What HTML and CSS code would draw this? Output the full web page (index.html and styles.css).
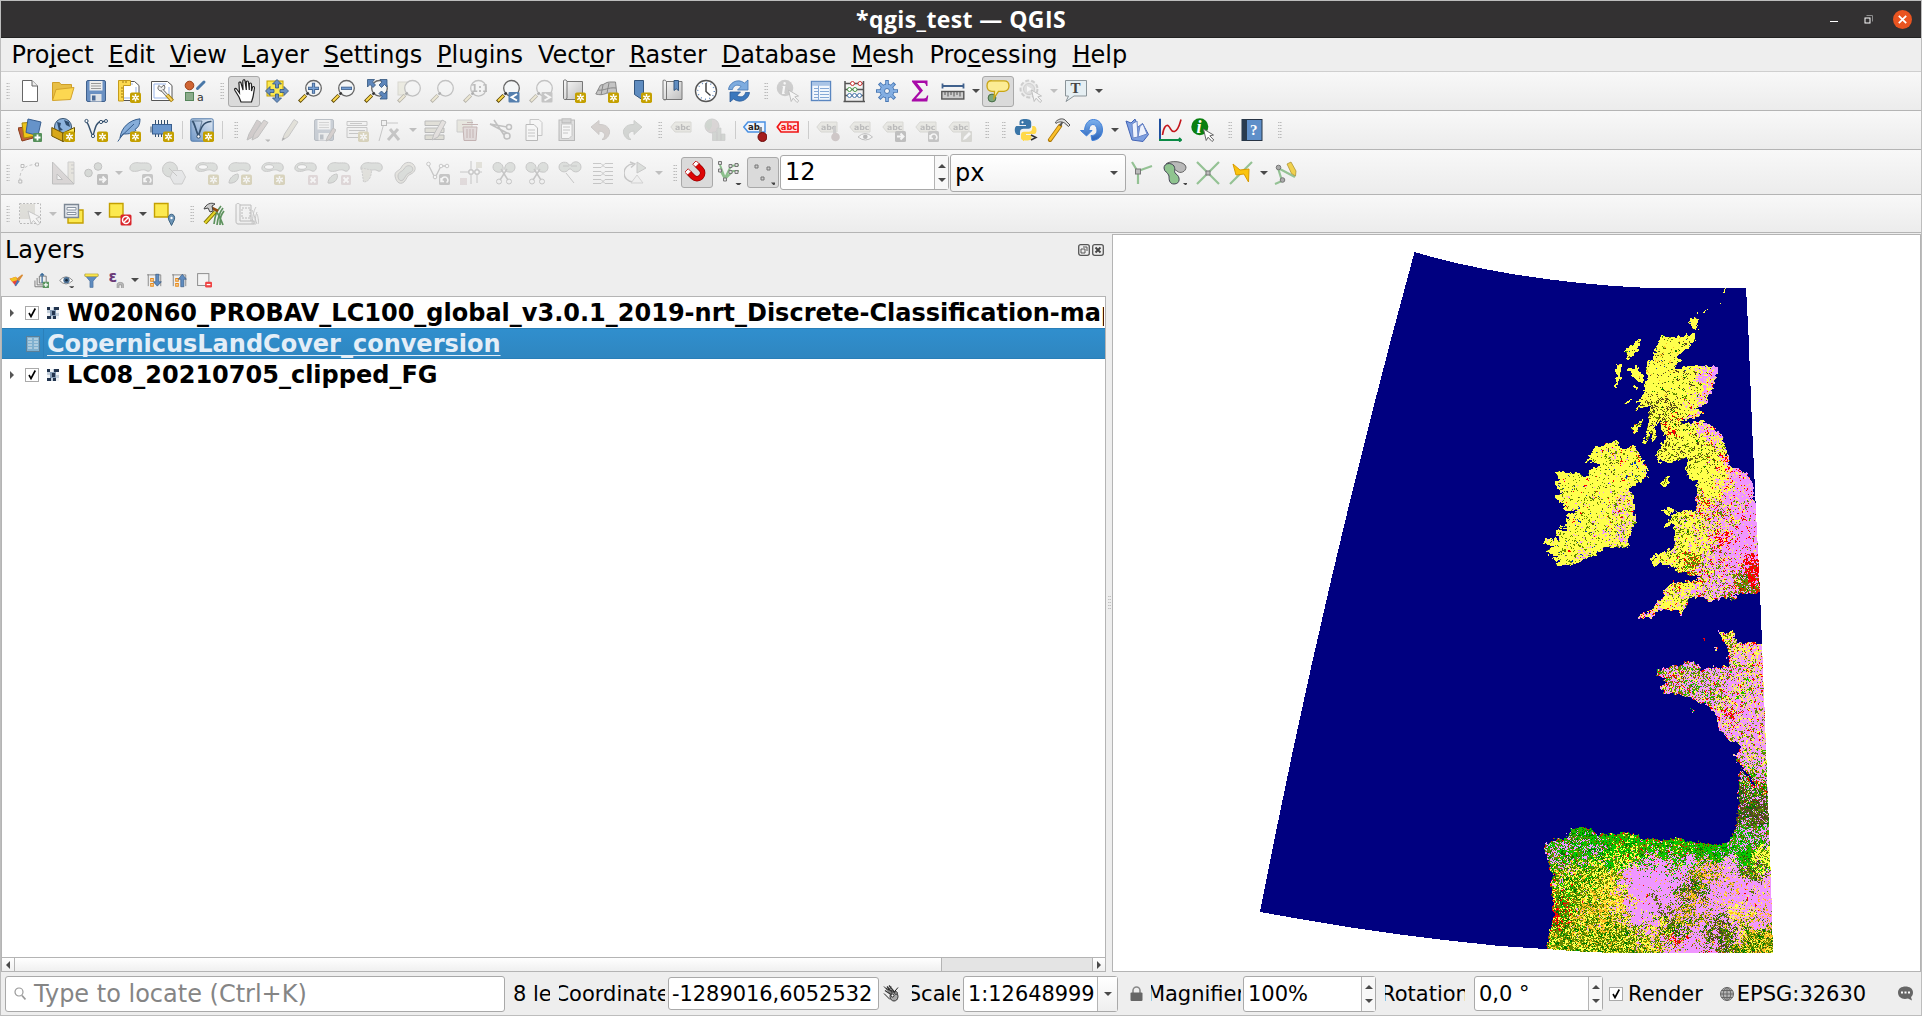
FILE: index.html
```html
<!DOCTYPE html>
<html lang="en">
<head>
<meta charset="utf-8">
<title>*qgis_test — QGIS</title>
<link rel="stylesheet" href="styles.css">
</head>
<body>
<svg class="sprite" width="0" height="0" aria-hidden="true">
  <defs>
    <linearGradient id="steel" x1="0" y1="0" x2="1" y2="1"><stop offset="0" stop-color="#fafafa"/><stop offset="1" stop-color="#bdbdbd"/></linearGradient>
    <linearGradient id="sky" x1="0" y1="0" x2="0" y2="1"><stop offset="0" stop-color="#7db2ee"/><stop offset="1" stop-color="#2a62b8"/></linearGradient>
    <linearGradient id="pale" x1="0" y1="1" x2="1" y2="0"><stop offset="0" stop-color="#6f96c6"/><stop offset="1" stop-color="#e2ebf5"/></linearGradient>
  </defs>
  <!-- corner badges -->
  <symbol id="b-new" viewBox="0 0 24 24"><rect x="13" y="13.5" width="11" height="10.5" rx="1.8" fill="#c4a000"/><path d="M18.5 15v7.600M15.200 16.900l6.600 3.800M21.800 16.900l-6.600 3.800" stroke="#fff" stroke-width="1.500"/><circle cx="18.500" cy="18.800" r="1.500" fill="#fff"/><circle cx="18.500" cy="18.800" r=".7" fill="#c4a000"/></symbol>
  <symbol id="b-del" viewBox="0 0 24 24"><rect x="14" y="14" width="10" height="10" rx="1.500" fill="#d9a0a8"/><path d="M16.500 16.500l5 5M21.500 16.500l-5 5" stroke="#fff" stroke-width="1.800"/></symbol>
  <symbol id="b-go" viewBox="0 0 24 24"><rect x="13" y="13" width="11" height="11" rx="1.500" fill="#666"/><path d="M15 18.500h6M18.500 15.500l3 3-3 3" stroke="#fff" stroke-width="2" fill="none"/></symbol>
  <symbol id="b-rot" viewBox="0 0 24 24"><rect x="13" y="13" width="11" height="11" rx="1.500" fill="#777"/><path d="M16 20a3 3 0 1 1 4.500 1.500M15 17v3.500h3" stroke="#fff" stroke-width="1.500" fill="none"/></symbol>
  <symbol id="loupe" viewBox="0 0 24 24"><circle cx="15.500" cy="9.300" r="7.800" fill="#f4f6f7" stroke="#666" stroke-width="1.300"/><path d="M8.500 15.500l2.200-2" stroke="#333" stroke-width="2.200"/><path d="M1.300 22.700l6.500-6.500" stroke="#5a4500" stroke-width="3.600"/><path d="M2 22l5.500-5.500" stroke="#fcd94f" stroke-width="2"/></symbol>
  <symbol id="pointer" viewBox="0 0 24 24"><path d="M12.500 11l10 6-3.700.8 4 4.200-1.800 1.500-3.900-4.300-1.900 3.300z" fill="#fff" stroke="#666" stroke-width="1"/></symbol>
  <symbol id="tag" viewBox="0 0 24 24"><path d="M.8 9L5 4h16v10H5z" fill="#d5d3b4" stroke="#a8a68c"/><text x="5" y="12" font-size="7.800" font-weight="bold" fill="#555">abc</text></symbol>
  <symbol id="blob" viewBox="0 0 24 24"><path d="M1 6c1-4 6-5 10-4 5 0 10-1 11 3 1 3-1 6-4 5-3-2-6-1-9 0-5 1-9 0-8-4z" fill="#a8bba8" stroke="#777"/></symbol>
  <symbol id="sheet" viewBox="0 0 24 24"><path d="M1.500 2.500h16l4.500 4v15h-20.500z" fill="#fff" stroke="#555"/><path d="M4 5h12M4 5v14h15V8" fill="none" stroke="#9ab5ea"/></symbol>
  <!-- project -->
  <symbol id="new" viewBox="0 0 24 24"><path d="M4.500 1.500h9.500l5.500 5.500v15.500h-15z" fill="#fff" stroke="#666"/><path d="M14 1.500v5.500h5.500" fill="#eee" stroke="#666"/></symbol>
  <symbol id="open" viewBox="0 0 24 24"><path d="M1.500 21V3.500h7l1.500 2h10.500V10" fill="#e8bf46" stroke="#cf9f28"/><path d="M1.500 21.500L5 10.500l18-2-3.500 12z" fill="#fcd751" stroke="#d3a32a"/></symbol>
  <symbol id="save" viewBox="0 0 24 24"><rect x="2.500" y="1.500" width="19" height="21" rx="1.500" fill="#6a90c2" stroke="#40618d"/><rect x="5.500" y="2" width="13" height="9.500" fill="#eee"/><path d="M7 4.500h10M7 7h10M7 9.500h10" stroke="#999"/><rect x="6.500" y="15" width="11" height="7.500" fill="#dfe3e8"/><rect x="8" y="16.500" width="3.500" height="5" fill="#4a6a97"/></symbol>
  <symbol id="layout" viewBox="0 0 24 24"><use href="#sheet"/><path d="M1.500 1.500h12v5h-7v15.500h-5z" fill="#fcd94f" stroke="#c49b1c"/><path d="M4 9h2M4 12h2M4 15h2M4 18h2M9 2v2M6 2v2" stroke="#a07a10"/><use href="#b-new"/></symbol>
  <symbol id="manager" viewBox="0 0 24 24"><use href="#sheet"/><path d="M9 6.500l2 2 3-2.500c2 3 0 6-3 6-3-.5-4-3-2-5.500z" fill="#eee" stroke="#666"/><path d="M12 11l5.500 6" stroke="#666" stroke-width="3"/><path d="M12 11l5.500 6" stroke="#eee" stroke-width="1.500"/><path d="M17 16l5.500 6" stroke="#a57c00" stroke-width="4"/><path d="M17 16l5 5.500" stroke="#f5d060" stroke-width="2"/></symbol>
  <symbol id="style" viewBox="0 0 24 24"><circle cx="6.500" cy="6.500" r="4.300" fill="#cf6534" stroke="#9b3e14"/><path d="M14.500 9.500l6.500-6.500" stroke="#4a78a8" stroke-width="3" stroke-linecap="round"/><rect x="2.500" y="13.500" width="8" height="8" fill="#8bab8b" stroke="#55855a"/><text x="14" y="22" font-size="11" font-style="normal" font-weight="normal" fill="#333">a</text></symbol>
  <!-- navigation -->
  <symbol id="hand" viewBox="0 0 24 24"><path d="M7 14L4.500 10.500C3 8.500 1.500 9.500 2.500 11.500L6.500 18l2 5h10.500l1.500-5 1.500-9c0-2-2-2-2.200 0L19 12V5.500c0-2-2.200-2-2.200 0V11l-.8-7.500c0-2-2.300-2-2.200 0V11L12.500 2c-.2-2-2.300-1.500-2.200.5L10.500 11 8.500 4c-.5-1.800-2.500-1-2 .8z" fill="#fff" stroke="#222" stroke-width="1.200" transform="translate(.5)"/></symbol>
  <symbol id="panto" viewBox="0 0 24 24"><rect x="2" y="2" width="16" height="15" fill="#fce94f" stroke="#c4a000"/><path d="M12 .5l4.500 4.500h-3v4h-3V5h-3zM12 23.500l4.500-4.500h-3v-4h-3v4h-3zM.5 12L5 7.500v3h4v3H5v3zM23.500 12L19 7.500v3h-4v3h4v3z" fill="#6a90c2" stroke="#33557d" stroke-width=".8"/></symbol>
  <symbol id="zin" viewBox="0 0 24 24"><use href="#loupe"/><path d="M15.500 3.800v11M10 9.300h11" stroke="#40618d" stroke-width="3.200"/><path d="M15.500 4.500v9.600M10.700 9.300h9.600" stroke="#76a0d4" stroke-width="1.500"/></symbol>
  <symbol id="zout" viewBox="0 0 24 24"><use href="#loupe"/><path d="M10 9.300h11" stroke="#40618d" stroke-width="3.200"/><path d="M10.700 9.300h9.600" stroke="#76a0d4" stroke-width="1.500"/></symbol>
  <symbol id="zfull" viewBox="0 0 24 24"><use href="#loupe"/><path d="M3.500.5h7L8.500 3l3 3L9 8.500l-3-3-2.500 2.500zM23 .5h-7l2 2.500-3 3L17.500 8.500l3-3L23 8zM23 20h-7l2-2.500-3-3 2.500-2.500 3 3L23 12z" fill="#5d86bb" stroke="#33557d" stroke-width=".8"/></symbol>
  <symbol id="zsel" viewBox="0 0 24 24"><rect x="1" y="3" width="13" height="13" fill="#e0dc9a" stroke="#aaa578"/><use href="#loupe"/></symbol>
  <symbol id="z11" viewBox="0 0 24 24"><use href="#loupe"/><text x="8" y="13" font-size="10" font-weight="bold" fill="#555">1:1</text></symbol>
  <symbol id="zprev" viewBox="0 0 24 24"><use href="#loupe"/><rect x="12.500" y="13" width="11" height="10.500" rx="1" fill="#557fae"/><path d="M21 15l-5.500 3.300L21 21.500" stroke="#fff" stroke-width="2" fill="none"/></symbol>
  <symbol id="znext" viewBox="0 0 24 24"><use href="#loupe"/><rect x="12.500" y="13" width="11" height="10.500" rx="1" fill="#777"/><path d="M15.500 15l5.500 3.300-5.500 3.200" stroke="#fff" stroke-width="2" fill="none"/></symbol>
  <symbol id="mapnew" viewBox="0 0 24 24"><path d="M1.500 1.500c2-1.500 3.500 0 3.500 1V19c-.5 2-3 2-3.500.5zM5 2.500h15.500v18H3" fill="url(#steel)" stroke="#777"/><use href="#b-new"/></symbol>
  <symbol id="map3d" viewBox="0 0 24 24"><path d="M.8 15L5.500 6c4 0 5-3 9-3h6l1.500 13-8-2c-4 0-6 3-13.200 1z" fill="#c4c4c4" stroke="#888"/><path d="M3 11c6 1 10-3 18-2M8 6L6 16M14 4l-2 10" stroke="#888" fill="none"/><use href="#b-new"/></symbol>
  <symbol id="bmnew" viewBox="0 0 24 24"><path d="M6.500 1.500h9v20l-4.500-3-4.500-3z" fill="#5f8cc0" stroke="#33557d"/><use href="#b-new"/></symbol>
  <symbol id="bms" viewBox="0 0 24 24"><path d="M2 1.500c1.500-1 3.500 0 3.500 1.500v17c0 1-3 1.500-3.500 0zM5.500 2.500h15.500v18H3" fill="url(#steel)" stroke="#777"/><path d="M13 1.500h4.500v10L15.200 9.800 13 11.500z" fill="#5f8cc0" stroke="#33557d"/></symbol>
  <symbol id="clock" viewBox="0 0 24 24"><circle cx="12" cy="12" r="10.500" fill="#fff" stroke="#555" stroke-width="1.400"/><circle cx="12" cy="12" r="8.300" fill="none" stroke="#6a90c2" stroke-width="1.500" stroke-dasharray="1 3.345"/><path d="M12 4v8.500l4.500 4" stroke="#444" stroke-width="1.500" fill="none"/></symbol>
  <symbol id="refresh" viewBox="0 0 24 24"><path d="M1.500 10.500C2 4.500 10-1.500 17.500 4L21 1v10H10.500l3.500-3.500C10 4.500 6 7 5.500 10.500z" fill="#7eacdf" stroke="#4476b4" stroke-width=".8"/><path d="M22.500 13.500C22 19.500 14 25.500 6.500 20L3 23V13h10.500L10 16.500c4 3 8 .5 8.500-3z" fill="#3b78bd" stroke="#2b5c99" stroke-width=".8"/></symbol>
  <!-- attributes -->
  <symbol id="ident" viewBox="0 0 24 24"><circle cx="9" cy="9" r="8.300" fill="#888"/><text x="5.500" y="14.500" font-family="Liberation Serif" font-size="16" font-weight="bold" font-style="italic" fill="#fff">i</text><use href="#pointer"/></symbol>
  <symbol id="table" viewBox="0 0 24 24"><rect x="2.500" y="2.500" width="19" height="19" fill="#f2f7fd" stroke="#5a86c0" stroke-width="1.400"/><path d="M3 4.800h18" stroke="#a9c4e6" stroke-width="4"/><path d="M5 9.500h4M11 9.500h9M5 12.500h4M11 12.500h9M5 15.500h4M11 15.500h9M5 18.500h4M11 18.500h9M9.500 6.500v15" stroke="#86a9d6"/></symbol>
  <symbol id="abacus" viewBox="0 0 24 24"><path d="M3 2v20M21.500 2v20M1.500 22.500h21.500M3 4.500h18.500M3 10.500h18.500M3 16.500h18.500" stroke="#555" stroke-width="1.500"/><g stroke-width="1" fill="#fff"><g stroke="#c33"><circle cx="10.500" cy="4.500" r="2"/><circle cx="18" cy="4.500" r="2"/></g><g stroke="#4a9a4a"><circle cx="7.500" cy="10.500" r="2"/><circle cx="13" cy="10.500" r="2"/></g><g stroke="#4a7ab0"><circle cx="7.500" cy="16.500" r="2"/><circle cx="12.500" cy="16.500" r="2"/><circle cx="17.500" cy="16.500" r="2"/></g></g></symbol>
  <symbol id="gear" viewBox="0 0 24 24"><g stroke="#4a79b5" stroke-width="3.600"><path d="M12 1v22M1 12h22M4.200 4.200l15.600 15.600M19.800 4.200L4.200 19.800"/></g><circle cx="12" cy="12" r="7" fill="#83aee2" stroke="#4a79b5"/><g stroke="#83aee2" stroke-width="2"><path d="M12 2v20M2 12h20M5 5l14 14M19 5L5 19"/></g><circle cx="12" cy="12" r="2.500" fill="#f5f5f5" stroke="#4a79b5"/></symbol>
  <symbol id="sigma" viewBox="0 0 24 24"><path d="M4 1.500h15.500v5.500h-1.300c-.5-2.500-1-3-3.700-3H9l6 7.500-7 8h7.500c2.500 0 3-1 3.500-3h1.300L19.300 22.500H3.800v-1.500l7.700-8.800L4 2.800z" fill="#a80aa8"/></symbol>
  <symbol id="ruler" viewBox="0 0 24 24"><path d="M1 7h22M1.500 4.500v5M22.500 4.500v5" stroke="#40618d" stroke-width="1.800"/><rect x=".8" y="12.500" width="22" height="7.500" fill="#ccc" stroke="#555" stroke-width="1.400"/><path d="M4 13v3M7 13v4.500M10 13v3M13 13v4.500M16 13v3M19 13v4.500" stroke="#555"/></symbol>
  <symbol id="tip" viewBox="0 0 24 24"><circle cx="6" cy="19" r="3.900" fill="#7fa87f" stroke="#456b45"/><path d="M6 1.800h12q5 0 5 5t-5 5.500h-5.500L8 19l.5-6.700H6q-5 0-5-5.500t5-5z" fill="#fcec94" stroke="#c9a515" stroke-width="1.300"/></symbol>
  <symbol id="action" viewBox="0 0 24 24"><circle cx="10" cy="10" r="8.500" fill="#e0e0e0" stroke="#888" stroke-width="2" stroke-dasharray="4 2"/><circle cx="10" cy="10" r="5.500" fill="#bbb" stroke="#888"/><path d="M8 7l5 3-5 3z" fill="#fff"/><use href="#pointer"/></symbol>
  <symbol id="note" viewBox="0 0 24 24"><path d="M1.500 1.500h21v15.500H10L2 22.500 4.500 17h-3z" fill="#e6eff3" stroke="#8b9499"/><text x="6.500" y="13.500" font-family="Liberation Serif" font-size="15" font-weight="bold" fill="#444">T</text></symbol>
  <!-- data sources -->
  <symbol id="source" viewBox="0 0 24 24"><path d="M0 10l12-2 3 12-11 3z" fill="#c0603a" stroke="#8a3c1c"/><path d="M4 5l12-1 1 14-11 2z" fill="#efc419" stroke="#a8860a"/><path d="M10 1l13 3-3 13.500-12-3z" fill="#6693c9" stroke="#395f8f"/><rect x="15" y="15" width="9" height="9" rx="1" fill="#55905a"/><path d="M19.500 16.500v6M16.500 19.500h6" stroke="#fff" stroke-width="1.800"/></symbol>
  <symbol id="geopkg" viewBox="0 0 24 24"><circle cx="12" cy="9" r="8.500" fill="#8eb4dd" stroke="#34516f"/><path d="M6 4l4 1-1 4 3 3-4 1zM13 2l5 2 1 5-4-2z" fill="#2f4d6d"/><path d="M.8 9.500L12 15v8.500L.8 18z" fill="#d8a81a" stroke="#6d5300"/><path d="M23.500 9.500L12 15v8.500l11.500-5z" fill="#fbe95d" stroke="#6d5300"/><use href="#b-new"/></symbol>
  <symbol id="vnew" viewBox="0 0 24 24"><path d="M2 3.500C5 5 6 14 9 18c2-7 3-14 8-14.500h5" stroke="#34506e" fill="none" stroke-width="1.400"/><g fill="#fff" stroke="#34506e"><circle cx="2.500" cy="3" r="1.600"/><circle cx="9" cy="18" r="1.600"/><circle cx="17" cy="4" r="1.600"/><circle cx="22" cy="3" r="1.500"/></g><use href="#b-new"/></symbol>
  <symbol id="feather" viewBox="0 0 24 24"><path d="M3 20C4 10 12 2 23 .8c0 6-2 9-5 10.500l1 1C15 16 10 16 6 16z" fill="#86add9" stroke="#365e8e"/><path d="M.8 23.500L5 17.500 17 6" stroke="#365e8e" fill="none"/><use href="#b-new"/></symbol>
  <symbol id="chip" viewBox="0 0 24 24"><path d="M5.500 2v4M8.500 2v4M11.500 2v4M14.500 2v4M17.500 2v4M5.500 15v4M8.500 15v4M11.500 15v4M14.500 15v4" stroke="#34506e"/><rect x="2.500" y="6.500" width="19" height="9.500" fill="#6a96cc" stroke="#395f8f"/><path d="M1 8.500v6" stroke="#34506e"/><use href="#b-new"/></symbol>
  <symbol id="virt" viewBox="0 0 24 24"><rect x=".8" y=".8" width="22.400" height="22.400" rx="1.500" fill="url(#pale)" stroke="#4f78a8"/><path d="M2.500 3C5 5 6 14 8.500 18c2-7 4-14 12-14.500h1" stroke="#34506e" fill="none" stroke-width="1.600"/><path d="M2 3h10l-3.500 14z" fill="none" stroke="#34506e" stroke-width=".6"/><circle cx="8.500" cy="18.500" r="1.700" fill="#fff" stroke="#34506e"/><use href="#b-new"/></symbol>
  <!-- digitizing -->
  <symbol id="pencil" viewBox="0 0 24 24"><path d="M3 22.500L5.500 16 15 1.500l4 2.500-9.500 14.500z" fill="#cbbf8d" stroke="#777"/><path d="M3 22.500l1-3 2 1.200z" fill="#333"/></symbol>
  <symbol id="pencils" viewBox="0 0 24 24"><path d="M1 22L3 16 11 2l4 2.500L7 19z" fill="#a88080" stroke="#666"/><path d="M6 22L8 16 18 2l4 2.500L12 19z" fill="#b9958c" stroke="#666"/><path d="M19 21.500h6l-3 2.500z" fill="#555"/></symbol>
  <symbol id="savee" viewBox="0 0 24 24"><use href="#save"/><path d="M14 23l1.500-4L21 10l3 2-5.500 9z" fill="#b98f88" stroke="#666"/></symbol>
  <symbol id="addrec" viewBox="0 0 24 24"><path d="M2 3.500h20v4H2zM2 9.500h20v10H2zM4 12.500h16M4 15.500h16M5 5.500h12" fill="#eee" stroke="#777"/><use href="#b-new"/></symbol>
  <symbol id="vertex" viewBox="0 0 24 24"><path d="M1 23L6 5h14" stroke="#777" fill="none"/><rect x="3.500" y="2.500" width="5" height="5" fill="#eee" stroke="#555"/><path d="M10 22L20 11M12 11l9 11" stroke="#777" stroke-width="3"/></symbol>
  <symbol id="multi" viewBox="0 0 24 24"><path d="M2 3h19v4.500H2zM2 10h19v4.500H2zM2 17h19v4.500H2z" fill="#c4bc88" stroke="#555"/><path d="M9 22l2-6L19 2l4 2-8 15z" fill="#d5bcb0" stroke="#666"/></symbol>
  <symbol id="trash" viewBox="0 0 24 24"><path d="M1 2h15v12H1z" fill="#d5d09a" stroke="#888"/><path d="M7 9h14l-1 13.500H8zM6 6.500h16M11 4.500h6" fill="#dba9a9" stroke="#a33"/><path d="M11 11v9M14 11v9M17 11v9" stroke="#a33"/></symbol>
  <symbol id="cut" viewBox="0 0 24 24"><path d="M1 6l17 9M5 2l10 15M1 6l17 3" stroke="#666" stroke-width="1.600" fill="none"/><circle cx="20" cy="9" r="2.500" fill="none" stroke="#666" stroke-width="1.500"/><circle cx="18" cy="18" r="3" fill="none" stroke="#666" stroke-width="1.500"/></symbol>
  <symbol id="copy" viewBox="0 0 24 24"><path d="M8 1.500h9l3 3v13H8z" fill="#fafafa" stroke="#777"/><path d="M4 6.500h8l3.500 3.500v12.500H4z" fill="#fff" stroke="#555"/><path d="M6 12h7M6 15h7M6 18h7" stroke="#777"/></symbol>
  <symbol id="paste" viewBox="0 0 24 24"><rect x="4" y="2" width="15.500" height="20.500" fill="#b9b9b9" stroke="#555"/><path d="M6.500 6h10.500v11.500l-3 3H6.500z" fill="#fff" stroke="#777"/><rect x="7" y=".8" width="9" height="4" fill="#999" stroke="#555"/><path d="M8 9h7M8 12h7M8 15h5" stroke="#777"/></symbol>
  <symbol id="undo" viewBox="0 0 24 24"><path d="M3 9l8-6.500v4c9-.5 12 6 10 10-1 3-4 5.500-7 5 4-2.500 4-8-3-8.500v3.500z" fill="#b08f80" stroke="#8e7a72"/></symbol>
  <symbol id="redo" viewBox="0 0 24 24"><path d="M21 9l-8-6.500v4C4 6 1 12.500 3 16.500c1 3 4 5.500 7 5C6 19 6 13.500 13 13v3.500z" fill="#93a593" stroke="#7e8a7e"/></symbol>
  <!-- labels -->
  <symbol id="pie" viewBox="0 0 24 24"><circle cx="9" cy="8" r="7" fill="#b99a9a" stroke="#888"/><path d="M9 8V1a7 7 0 0 0-7 7l4 5z" fill="#7fa57f"/><path d="M9.500 14h4.500v8.500H9.500zM14 10h4v12.500h-4zM18 16h4v6.500h-4z" fill="#8da88d" stroke="#888" stroke-width=".7"/></symbol>
  <symbol id="tagpin" viewBox="0 0 24 24"><path d="M.8 9L5 4h17v10H5z" fill="#eef5ff" stroke="#4a90e2" stroke-width="1.500"/><text x="5" y="12" font-size="8.500" font-weight="bold" fill="#222">ab</text><path d="M17.500 9v9" stroke="#888" stroke-width="3"/><circle cx="19.500" cy="19" r="4.500" fill="#a51d1d" stroke="#6d0b0b"/></symbol>
  <symbol id="tagred" viewBox="0 0 24 24"><path d="M1.300 9L5 4h17v10H5z" fill="#ffe3e3" stroke="#f01414" stroke-width="1.700"/><text x="4.800" y="12" font-size="8.300" font-weight="bold" fill="#f01414">abc</text></symbol>
  <symbol id="tagpin2" viewBox="0 0 24 24"><use href="#tag"/><path d="M18.500 9v9" stroke="#888" stroke-width="3"/><circle cx="19.500" cy="19" r="4.300" fill="#a77"/></symbol>
  <symbol id="tageye" viewBox="0 0 24 24"><use href="#tag"/><path d="M9 19q7-7 14.500 0-7 6-14.500 0z" fill="#fff" stroke="#666"/><circle cx="16.300" cy="18.800" r="2.300" fill="#555"/></symbol>
  <symbol id="taggo" viewBox="0 0 24 24"><use href="#tag"/><use href="#b-go"/></symbol>
  <symbol id="tagrot" viewBox="0 0 24 24"><use href="#tag"/><use href="#b-rot"/></symbol>
  <symbol id="tagedit" viewBox="0 0 24 24"><use href="#tag"/><rect x="13" y="13" width="11" height="11" rx="1" fill="#aaa98d"/><path d="M15 22l1-3 5-5 2 2-5 5z" fill="#fff"/></symbol>
  <!-- plugins -->
  <symbol id="python" viewBox="0 0 24 24"><path d="M11 1c-4 0-5.500 1-5.500 3.500V7H12v1H3C1 8 .8 10.500.8 12.500S2 17 4 17h2v-3c0-2 1.500-3.200 3.500-3.200h5c1.500 0 2.700-1 2.700-2.800V4.500C17.200 2 15 1 11 1z" fill="#3b76a8"/><path d="M12.500 22.500c4 0 5-1 5-3.200V17H12v-1h8c2 0 2.500-2 2.500-4s-1-4-3-4h-1.300v2.500c0 2-1.500 3.300-3.500 3.300H10c-1.800 0-3 1-3 3v3c0 2 1.500 2.700 5.500 2.700z" fill="#ffd94a"/><circle cx="8.500" cy="4.300" r="1.100" fill="#fff"/><path d="M17 17l5 2.500-5 2.500" stroke="#333" stroke-width="1.500" fill="none"/></symbol>
  <symbol id="hammer" viewBox="0 0 24 24"><path d="M3 22L13 8" stroke="#ae7809" stroke-width="4.200" stroke-linecap="round"/><path d="M3.200 21.500L13 8" stroke="#fbc02a" stroke-width="2.500" stroke-linecap="round"/><path d="M13 8l3-5" stroke="#555" stroke-width="2"/><path d="M8.500 4C12 0 17 0 19 3l4 4-1.500 1.500L17.500 5C14 3 11 4 9 5.500z" fill="#ddd" stroke="#555"/></symbol>
  <symbol id="reload" viewBox="0 0 24 24"><path d="M.5 12.500h4C5 5 9 1.500 13.500 1.500 19 1.500 22.500 6 22.500 12S18 22.500 12 22.500l-1-5c4 0 6-2 6-5.500s-2-5.500-4-5.500-4 2-4 6h3L6.500 18z" fill="url(#sky)" stroke="#4382da"/></symbol>
  <symbol id="bookb" viewBox="0 0 24 24"><path d="M1 3l6 19 11 1.500 5.500-7-6-11-5 4L10 1 6 5z" fill="#7d9fe0" stroke="#4263b5"/><path d="M7 6l5-3 1 16-5 1zM13 19l2-11 3-2 4 10z" fill="#eef2fc" stroke="#6b87c8"/></symbol>
  <symbol id="graph" viewBox="0 0 24 24"><path d="M2 .8V22" stroke="#1d4e9e" stroke-width="2"/><path d="M1 22h22M21 20l2 2-2 1.500" stroke="#0a8a45" stroke-width="2" fill="none"/><path d="M4.500 17c1-8 4-11 6-9 3 3 2 6 6 5.500 4-1 5-7 6.500-12" stroke="#c4161c" stroke-width="1.600" fill="none"/></symbol>
  <symbol id="info" viewBox="0 0 24 24"><circle cx="8.800" cy="8.800" r="8.500" fill="#0a8010"/><text x="5.500" y="15" font-family="Liberation Serif" font-size="18" font-weight="bold" font-style="italic" fill="#fff">i</text><use href="#pointer"/></symbol>
  <symbol id="help" viewBox="0 0 24 24"><rect x="2" y="1.500" width="20" height="21" fill="#5f8fc9" stroke="#273445"/><rect x="2" y="1.500" width="5" height="21" fill="#293b4f"/><text x="10" y="17" font-family="Liberation Serif" font-size="15" font-weight="bold" fill="#fff">?</text></symbol>
  <!-- advanced digitizing -->
  <symbol id="curve" viewBox="0 0 24 24"><path d="M2 20C1 10 6 3 20 3.500" stroke="#777" stroke-dasharray="3 2" fill="none"/><path d="M.8 19h3v3h-3zM3 3.500h3v3H3zM17.500 2h3v3h-3z" fill="#fff" stroke="#555"/></symbol>
  <symbol id="tri" viewBox="0 0 24 24"><path d="M17 1h6v22l-6-6z" fill="#d8cca0" stroke="#888"/><path d="M1.500 1v22H23zM6 13v5.500h5.500z" fill="#b9a3a3" stroke="#666" fill-rule="evenodd"/><path d="M20 4h3M20 8h3M20 12h3" stroke="#777"/></symbol>
  <symbol id="dots" viewBox="0 0 24 24"><circle cx="4.500" cy="12" r="3.800" fill="#9bb09b" stroke="#666"/><circle cx="14" cy="5.500" r="3.800" fill="#9bb09b" stroke="#666"/><use href="#b-go"/></symbol>
  <symbol id="blobrot" viewBox="0 0 24 24"><use href="#blob"/><use href="#b-rot"/></symbol>
  <symbol id="simplify" viewBox="0 0 24 24"><circle cx="8" cy="8.500" r="7.500" fill="#a8bba8" stroke="#777"/><path d="M11 9.500h9l3.500 6.500-3.500 7h-8L8 16z" fill="#cdd6dd" stroke="#888"/><path d="M7 7l8 8" stroke="#777"/></symbol>
  <symbol id="ring" viewBox="0 0 24 24"><use href="#blob"/><ellipse cx="8" cy="6" rx="4.500" ry="2.300" fill="#fff" stroke="#777"/><use href="#b-new"/></symbol>
  <symbol id="part" viewBox="0 0 24 24"><use href="#blob"/><path d="M1 22c0-5 5-9 9-9 2 5-3 10-9 9z" fill="#a8bba8" stroke="#777"/><use href="#b-new"/></symbol>
  <symbol id="ringx" viewBox="0 0 24 24"><use href="#blob"/><ellipse cx="8" cy="6" rx="4.500" ry="2.300" fill="#fff" stroke="#777"/><use href="#b-del"/></symbol>
  <symbol id="partx" viewBox="0 0 24 24"><use href="#blob"/><path d="M1 22c0-5 5-9 9-9 2 5-3 10-9 9z" fill="#a8bba8" stroke="#777"/><use href="#b-del"/></symbol>
  <symbol id="reshape" viewBox="0 0 24 24"><use href="#blob"/><path d="M1.500 7l2 14c6 0 8-6 8-12z" fill="#c5c2a4" stroke="#888" stroke-dasharray="2 1"/></symbol>
  <symbol id="offset" viewBox="0 0 24 24"><path d="M2 14c0-4 4-4 6-7 3-6 8-7 12-4 4 4 2 8-2 10-4 1-4 5-7 8-5 4-9-2-9-7z" fill="#cfc9ac" stroke="#777"/><path d="M5 15c0-4 4-4 6-7 2-4 6-4 8-2 2 3 0 5-3 6-3 1-4 5-6 7-3 2-5-1-5-4z" fill="#a8bba8" stroke="#777"/></symbol>
  <symbol id="vrot" viewBox="0 0 24 24"><path d="M2 3l7 14L15 5h7" stroke="#777" fill="none" stroke-width="1.300"/><g fill="#fff" stroke="#777"><circle cx="2.500" cy="3" r="1.800"/><circle cx="9" cy="16" r="1.800"/><circle cx="15" cy="5" r="1.800"/><circle cx="21" cy="5" r="1.800"/></g><use href="#b-rot"/></symbol>
  <symbol id="trim" viewBox="0 0 24 24"><path d="M12 0v23M18 4v18M1 11h22" stroke="#777" fill="none"/><g fill="#fff" stroke="#555"><path d="M10 9h4v4h-4zM16 9h4v4h-4z"/></g><rect x="17" y="1" width="6" height="6" fill="#c9bf90"/><rect x="1" y="17" width="7" height="7" fill="#d9b0b4"/></symbol>
  <symbol id="split" viewBox="0 0 24 24"><path d="M1 6c0-6 9-6 10 0 1 4-2 6-6 5-3-1-4-3-4-5zM13 6c1-6 10-6 10 0 0 3-2 6-6 5-3 0-5-2-4-5z" fill="#a8bba8" stroke="#777"/><path d="M9 8l7 11M15 8L8 19" stroke="#777" stroke-width="1.500"/><circle cx="7" cy="20.500" r="2.500" fill="none" stroke="#777"/><circle cx="17" cy="20.500" r="2.500" fill="none" stroke="#777"/></symbol>
  <symbol id="merge" viewBox="0 0 24 24"><path d="M1 6c0-6 9-6 10-2h2c2-5 10-4 10 2 0 5-7 7-10 2h-2c-3 5-10 3-10-2z" fill="#a8bba8" stroke="#777"/><path d="M8 12l8 10M5 5h6M13 5h6" stroke="#777"/></symbol>
  <symbol id="mattr" viewBox="0 0 24 24"><path d="M2 2.500h8l2 2 2-2h8M2 6.500h8l2-2 2 2h8M2 10.500h8l2 2 2-2h8M2 14.500h8l2-2 2 2h8M2 18.500h8l2 2 2-2h8M2 22.500h8l2-2 2 2h8" stroke="#777" fill="none"/></symbol>
  <symbol id="rots" viewBox="0 0 24 24"><path d="M9 21a9 9 0 0 1 0-18M6 1l5 2-4 3.500" stroke="#777" stroke-width="1.400" fill="none"/><path d="M13 1l9 6-9 5z" fill="#a8bba8" stroke="#777"/><path d="M7 22l6-8 6 8z" fill="#eee" stroke="#999"/></symbol>
  <!-- snapping -->
  <symbol id="magnet" viewBox="0 0 24 24"><g transform="rotate(-45 12 12) translate(2.400 2.800) scale(.8)"><path d="M5 4v7.500a7 7 0 0 0 14 0V4" fill="none" stroke="#8e0000" stroke-width="7"/><path d="M5 5v6.500a7 7 0 0 0 14 0V5" fill="none" stroke="#dc0505" stroke-width="5.500"/><path d="M2 0h6v5H2zM16 0h6v5h-6z" fill="#fff" stroke="#b00"/></g></symbol>
  <symbol id="snapall" viewBox="0 0 24 24"><path d="M2 4l5 13L13 5l8-1M2 9l5 9 8-8h6" stroke="#8cc08c" stroke-width="2" fill="none"/><g fill="#ddd" stroke="#777"><path d="M.5.500h3v3h-3zM.5 8h3v3h-3zM5.500 17h3v3h-3zM11 3.500h3v3h-3zM17 2.500h3v3h-3zM17 9.500h3v3h-3zM11 9.500h3v3h-3z"/></g><path d="M17.500 22h6l-3 3z" fill="#444"/></symbol>
  <symbol id="snapdots" viewBox="0 0 24 24"><g fill="#ccc" stroke="#777"><path d="M4 4h3v3H4zM16 6h3v3h-3zM10 16h3v3h-3z"/></g><path d="M20 21.500h5.500l-2.700 3z" fill="#444"/></symbol>
  <symbol id="topo" viewBox="0 0 24 24"><path d="M2 1l6 10v12M8 10l14-5" stroke="#94c294" stroke-width="2.200" fill="none"/><rect x="5.500" y="8" width="5" height="5" fill="#bbb" stroke="#777"/></symbol>
  <symbol id="overlap" viewBox="0 0 24 24"><path d="M3 3c4-4 19-3 20 3 0 5-6 7-9 4z" fill="#b9b9b9" stroke="#666"/><path d="M1 7c0-5 7-6 10-2 2 4-1 5 2 8 4 2 5 10-2 10-5 0-5-5-5-8-1-4-5-4-5-8z" fill="#8fc48f" stroke="#445"/><path d="M20 22h5l-2.500 2.500z" fill="#444"/></symbol>
  <symbol id="inter" viewBox="0 0 24 24"><path d="M1 1l22 22M23 1L1 23" stroke="#94c294" stroke-width="2.200"/><rect x="10" y="10" width="4" height="4" fill="#bbb" stroke="#777"/></symbol>
  <symbol id="trace" viewBox="0 0 24 24"><path d="M23 1L1 23" stroke="#94c294" stroke-width="2.200"/><path d="M4 3l7 6 9-1-.5 13-4.500-8-8 1z" fill="#fbc40c" stroke="#d89b00"/></symbol>
  <symbol id="selfsnap" viewBox="0 0 24 24"><path d="M1 23l7-3-4-13 17 9" stroke="#94c294" stroke-width="2.200" fill="none"/><circle cx="4.500" cy="6.500" r="2.300" fill="#aaa" stroke="#777"/><circle cx="8.500" cy="19" r="2.300" fill="#aaa" stroke="#777"/><path d="M13 3l4-2 5 9-.5 5-4-2.500z" fill="#f1d14e" stroke="#a58b2a" stroke-width=".7"/></symbol>
  <!-- selection -->
  <symbol id="selrect" viewBox="0 0 24 24"><rect x="2" y="2" width="15" height="15" fill="#bfb898"/><rect x="1.500" y="1.500" width="21" height="20" fill="none" stroke="#555" stroke-dasharray="2 1.500"/><path d="M10 9l12 6-4 1.500 4 5-2.500 1.500-4-4.500-2.500 3z" fill="#fff" stroke="#777"/></symbol>
  <symbol id="selform" viewBox="0 0 24 24"><path d="M5 8h15v13H5z" fill="#fce94f" stroke="#c4a000" stroke-width="1.400"/><path d="M1.500 2.500h14v13h-14z" fill="#e3e7ec" stroke="#7c8794" stroke-width="1.400"/><path d="M4 5.500h9v2.500H4zM4 10.500h9v2H4z" fill="#fff" stroke="#8a95a3"/></symbol>
  <symbol id="desel" viewBox="0 0 24 24"><path d="M1.500 1.500h13.500v13.500H1.500z" fill="#fce94f" stroke="#c4a000" stroke-width="1.400"/><rect x="12.500" y="12.500" width="11" height="11" rx="1.500" fill="#d9252b"/><circle cx="18" cy="18" r="3.500" fill="none" stroke="#fff" stroke-width="1.500"/><path d="M15.500 20.500l5-5" stroke="#fff" stroke-width="1.500"/></symbol>
  <symbol id="selloc" viewBox="0 0 24 24"><path d="M1.500 1.500h13.500v13.500H1.500z" fill="#fce94f" stroke="#c4a000" stroke-width="1.400"/><path d="M18.500 23.500l-3-6c-1.500-7 7.500-7 6 0z" fill="#6b93b5" stroke="#3f6584"/><circle cx="18.500" cy="16" r="1.200" fill="#fff"/></symbol>
  <symbol id="grass" viewBox="0 0 24 24"><path d="M12 22C13 14 14 10 19 4M15 23c1-8 2-12 6-17M18 23c0-8 1-10 4-14M21 23c-3-8-4-10-7-14" stroke="#5d925d" stroke-width="1.700" fill="none"/><path d="M3 21l10-11" stroke="#7a6d00" stroke-width="4"/><path d="M3 21l10-11" stroke="#e3d427" stroke-width="2"/><path d="M8 5l8 4" stroke="#8f4c10" stroke-width="3"/><path d="M2 7C4 2 9 0 13 2l-3 2 1 5-3 1-2-4z" fill="#ccc" stroke="#444"/></symbol>
  <symbol id="scroll" viewBox="0 0 24 24"><path d="M1 3c0-2 4-2 4 0v16h14v3H3c-2 0-2-2-2-3zM5 3h11v16" fill="#eee" stroke="#555"/><rect x="7" y="6" width="8" height="10" fill="none" stroke="#555" stroke-dasharray="2 1"/><path d="M17 22C18 14 18 10 21 5M20 23c0-8 1-10 2-13M22 22c-3-8-3-10-5-14M24 22c-1-6-1-8-2-10" stroke="#777" fill="none"/></symbol>
  <!-- layer panel -->
  <symbol id="brush" viewBox="0 0 24 24"><path d="M1 9l10-3 5 6-5 9z" fill="#e8433d"/><path d="M1 9l4 5 9-3-3-5z" fill="#f2c322"/><path d="M9 20l2 1 6-8-3-3z" fill="#4976b5"/><path d="M12 9l9-7 1.500 1.500L16 13z" fill="#d98c35"/></symbol>
  <symbol id="group" viewBox="0 0 24 24"><path d="M1.500 12v10h14M5 8v11h13M8.500 5h11v11h-11z" fill="none" stroke="#777" stroke-width="1.500"/><path d="M13 1v15M10 4l3-3 3 3" stroke="#3b6c9b" stroke-width="2" fill="none"/><rect x="14" y="14" width="10" height="10" rx="1" fill="#5a955f"/><path d="M19 15.500v7M15.500 19h7" stroke="#fff" stroke-width="2"/></symbol>
  <symbol id="eye" viewBox="0 0 24 24"><path d="M1 12Q11 0 22 12 11 23 1 12z" fill="#fff" stroke="#888" stroke-width="1.500"/><circle cx="12" cy="11.500" r="5" fill="#4b6f93"/><circle cx="12" cy="11.500" r="2" fill="#123"/><path d="M16 21h9l-4.500 4z" fill="#444"/></symbol>
  <symbol id="filter" viewBox="0 0 24 24"><path d="M1 3h22l-8.500 10v10h-5V13z" fill="#5f8cc0" stroke="#4a6f9b"/><path d="M1.500 1.500h21v4h-21z" fill="#fce94f" stroke="#b8a132"/></symbol>
  <symbol id="expr" viewBox="0 0 24 24"><text x="-1" y="14" font-size="25" fill="#6b3b77">ε</text><path d="M13 25v-7c0-4 10-4 10 0v7h-3v-6h-4v6z" fill="#bbb" stroke="#888"/></symbol>
  <symbol id="expand" viewBox="0 0 24 24"><path d="M2 2v19M0 3h22v18" stroke="#888" stroke-width="1.500" fill="none"/><path d="M6 9h4v4H6zM6 17h4v4H6z" fill="#fff" stroke="#e78a18" stroke-width="1.800"/><path d="M14 2h5v12h4l-6.500 7L10 14h4z" fill="#5f8cc0" stroke="#33557d"/></symbol>
  <symbol id="collapse" viewBox="0 0 24 24"><path d="M2 2v19M0 3h22v18" stroke="#888" stroke-width="1.500" fill="none"/><path d="M6 9h4v4H6zM6 17h4v4H6z" fill="#fff" stroke="#e78a18" stroke-width="1.800"/><path d="M14 22h5V10h4l-6.500-8L10 10h4z" fill="#5f8cc0" stroke="#33557d"/></symbol>
  <symbol id="remove" viewBox="0 0 24 24"><rect x="1" y="1" width="18" height="19" fill="#f3f3f3" stroke="#888" stroke-width="1.500"/><rect x="13" y="14" width="11" height="9" rx="2" fill="#ef4444"/><path d="M15.500 18.500h6" stroke="#fff" stroke-width="2"/></symbol>
  <symbol id="raster" viewBox="0 0 12 12" shape-rendering="crispEdges"><path d="M0 0h12v12H0z" fill="#c3cfdb"/><path d="M3 0h3v3H3zM9 3h3v3H9zM0 6h3v3H0zM9 9h3v3H9z" fill="#eef2f6"/><path d="M3 3h6v6H3z" fill="#8299b3"/><path d="M0 0h3v3H0zM7 0h5v3H7zM5 4h3v4H5zM0 9h4v3H0zM6 9h3v3H6z" fill="#22344e"/></symbol>
</svg>

<div class="window">
  <header class="titlebar">
    <div class="title">*qgis_test — QGIS</div>
    <div class="controls">
      <span class="min"></span>
      <svg class="restore" viewBox="0 0 9 9"><path d="M2.500.5h6v6" stroke="#8b8b8b" fill="none"/><rect x="1" y="3" width="5" height="5" fill="none" stroke="#fff"/></svg>
      <span class="close"><svg viewBox="0 0 18 18"><path d="M5.500 5.500l7 7M12.500 5.500l-7 7" stroke="#fff" stroke-width="1.700"/></svg></span>
    </div>
  </header>

  <nav class="menubar">
    <span>Pro<u>j</u>ect</span><span><u>E</u>dit</span><span><u>V</u>iew</span><span><u>L</u>ayer</span><span><u>S</u>ettings</span><span><u>P</u>lugins</span><span>Vect<u>o</u>r</span><span><u>R</u>aster</span><span><u>D</u>atabase</span><span><u>M</u>esh</span><span>Pro<u>c</u>essing</span><span><u>H</u>elp</span>
  </nav>

  <div class="toolbar">
    <i class="grip first"></i>
    <b><svg><use href="#new"/></svg></b><b><svg><use href="#open"/></svg></b><b><svg><use href="#save"/></svg></b><b><svg><use href="#layout"/></svg></b><b><svg><use href="#manager"/></svg></b><b><svg><use href="#style"/></svg></b>
    <i class="grip"></i>
    <b class="on"><svg><use href="#hand"/></svg></b><b><svg><use href="#panto"/></svg></b><b><svg><use href="#zin"/></svg></b><b><svg><use href="#zout"/></svg></b><b><svg><use href="#zfull"/></svg></b><b class="off"><svg><use href="#zsel"/></svg></b><b class="off"><svg><use href="#loupe"/></svg></b><b class="off"><svg><use href="#z11"/></svg></b><b><svg><use href="#zprev"/></svg></b><b class="off"><svg><use href="#znext"/></svg></b><b><svg><use href="#mapnew"/></svg></b><b><svg><use href="#map3d"/></svg></b><b><svg><use href="#bmnew"/></svg></b><b><svg><use href="#bms"/></svg></b><b><svg><use href="#clock"/></svg></b><b><svg><use href="#refresh"/></svg></b>
    <i class="grip"></i>
    <b class="off"><svg><use href="#ident"/></svg></b><b><svg><use href="#table"/></svg></b><b><svg><use href="#abacus"/></svg></b><b><svg><use href="#gear"/></svg></b><b><svg><use href="#sigma"/></svg></b><b><svg><use href="#ruler"/></svg></b><i class="drop"></i><b class="on"><svg><use href="#tip"/></svg></b><b class="off"><svg><use href="#action"/></svg></b><i class="drop off"></i><b><svg><use href="#note"/></svg></b><i class="drop"></i>
  </div>

  <div class="toolbar">
    <i class="grip first"></i>
    <b><svg><use href="#source"/></svg></b><b><svg><use href="#geopkg"/></svg></b><b><svg><use href="#vnew"/></svg></b><b><svg><use href="#feather"/></svg></b><b><svg><use href="#chip"/></svg></b><i class="sep"></i><b><svg><use href="#virt"/></svg></b><i class="sep"></i>
    <i class="grip"></i>
    <b class="off"><svg><use href="#pencils"/></svg></b><b class="off"><svg><use href="#pencil"/></svg></b><b class="off"><svg><use href="#savee"/></svg></b><b class="off"><svg><use href="#addrec"/></svg></b><b class="off"><svg><use href="#vertex"/></svg></b><i class="drop off"></i><b class="off"><svg><use href="#multi"/></svg></b><b class="off"><svg><use href="#trash"/></svg></b><b class="off"><svg><use href="#cut"/></svg></b><b class="off"><svg><use href="#copy"/></svg></b><b class="off"><svg><use href="#paste"/></svg></b><b class="off"><svg><use href="#undo"/></svg></b><b class="off"><svg><use href="#redo"/></svg></b>
    <i class="grip"></i>
    <b class="off"><svg><use href="#tag"/></svg></b><b class="off"><svg><use href="#pie"/></svg></b><i class="sep"></i><b><svg><use href="#tagpin"/></svg></b><b><svg><use href="#tagred"/></svg></b><i class="sep"></i><b class="off"><svg><use href="#tagpin2"/></svg></b><b class="off"><svg><use href="#tageye"/></svg></b><b class="off"><svg><use href="#taggo"/></svg></b><b class="off"><svg><use href="#tagrot"/></svg></b><b class="off"><svg><use href="#tagedit"/></svg></b>
    <i class="grip"></i><i class="grip wide"></i>
    <b><svg><use href="#python"/></svg></b><b><svg><use href="#hammer"/></svg></b><b><svg><use href="#reload"/></svg></b><i class="drop"></i><b><svg><use href="#bookb"/></svg></b><b><svg><use href="#graph"/></svg></b><b><svg><use href="#info"/></svg></b>
    <i class="grip"></i>
    <b><svg><use href="#help"/></svg></b>
    <i class="grip wide"></i>
  </div>

  <div class="toolbar tall">
    <i class="grip first"></i>
    <b class="off"><svg><use href="#curve"/></svg></b><b class="off"><svg><use href="#tri"/></svg></b><b class="off"><svg><use href="#dots"/></svg></b><i class="drop off"></i><b class="off"><svg><use href="#blobrot"/></svg></b><b class="off"><svg><use href="#simplify"/></svg></b><b class="off"><svg><use href="#ring"/></svg></b><b class="off"><svg><use href="#part"/></svg></b><b class="off"><svg><use href="#ring"/></svg></b><b class="off"><svg><use href="#ringx"/></svg></b><b class="off"><svg><use href="#partx"/></svg></b><b class="off"><svg><use href="#reshape"/></svg></b><b class="off"><svg><use href="#offset"/></svg></b><b class="off"><svg><use href="#vrot"/></svg></b><b class="off"><svg><use href="#trim"/></svg></b><b class="off"><svg><use href="#split"/></svg></b><b class="off"><svg><use href="#split"/></svg></b><b class="off"><svg><use href="#merge"/></svg></b><b class="off"><svg><use href="#mattr"/></svg></b><b class="off"><svg><use href="#rots"/></svg></b><i class="drop off"></i>
    <i class="grip"></i>
    <b class="on"><svg><use href="#magnet"/></svg></b><b><svg><use href="#snapall"/></svg></b><b class="on"><svg><use href="#snapdots"/></svg></b>
    <div class="field spin tolerance"><span>12</span><em></em></div>
    <div class="units">px<i class="drop"></i></div>
    <b><svg><use href="#topo"/></svg></b><b><svg><use href="#overlap"/></svg></b><b><svg><use href="#inter"/></svg></b><b><svg><use href="#trace"/></svg></b><i class="drop"></i><b><svg><use href="#selfsnap"/></svg></b>
  </div>

  <div class="toolbar last">
    <i class="grip first"></i>
    <b class="off"><svg><use href="#selrect"/></svg></b><i class="drop off"></i><b><svg><use href="#selform"/></svg></b><i class="drop"></i><b><svg><use href="#desel"/></svg></b><i class="drop"></i><b><svg><use href="#selloc"/></svg></b>
    <i class="grip"></i>
    <b><svg><use href="#grass"/></svg></b><b class="off"><svg><use href="#scroll"/></svg></b>
  </div>

  <main class="workspace">
    <section class="panel">
      <div class="panel-head">
        <h2>Layers</h2>
        <svg class="dock" viewBox="0 0 26 12"><rect x=".7" y=".7" width="10.600" height="10.600" rx="2" fill="none" stroke="#555" stroke-width="1.300"/><path d="M5 3h4v4M3 5h4v4H3z" fill="none" stroke="#555"/><rect x="14.700" y=".7" width="10.600" height="10.600" rx="2" fill="none" stroke="#555" stroke-width="1.300"/><path d="M17.500 3.500l5 5M22.500 3.500l-5 5" stroke="#444" stroke-width="1.900"/></svg>
      </div>
      <div class="panel-tools">
        <b><svg><use href="#brush"/></svg></b><b><svg><use href="#group"/></svg></b><b><svg><use href="#eye"/></svg></b><b><svg><use href="#filter"/></svg></b><b><svg><use href="#expr"/></svg></b><i class="drop"></i><b class="after"><svg><use href="#expand"/></svg></b><b><svg><use href="#collapse"/></svg></b><b><svg><use href="#remove"/></svg></b>
      </div>
      <div class="tree">
        <div class="rows">
          <div class="row"><i class="twist"></i><i class="check"><svg viewBox="0 0 12 12"><path d="M3 6l2 3.500L9.300 1.500" stroke="#000" stroke-width="1.600" fill="none"/></svg></i><svg class="kind"><use href="#raster"/></svg><span class="cut">W020N60_PROBAV_LC100_global_v3.0.1_2019-nrt_Discrete-Classification-map_EPSG</span></div>
          <div class="row selected"><svg class="grid" viewBox="0 0 14 16"><rect x=".5" y=".5" width="13" height="15" fill="#7fb0cf" stroke="#5a7f99"/><path d="M2 3h4M8 3h4M2 6h4M8 6h4M2 9h4M8 9h4M2 12h4M8 12h4" stroke="#dbe8ef" stroke-width="1.200"/></svg><span>CopernicusLandCover_conversion</span></div>
          <div class="row"><i class="twist"></i><i class="check"><svg viewBox="0 0 12 12"><path d="M3 6l2 3.500L9.300 1.500" stroke="#000" stroke-width="1.600" fill="none"/></svg></i><svg class="kind"><use href="#raster"/></svg><span>LC08_20210705_clipped_FG</span></div>
        </div>
        <div class="hscroll"><i class="left"></i><div class="thumb"></div><div class="groove"></div><i class="right"></i></div>
      </div>
    </section>
    <div class="splitter"><i class="grip"></i></div>
    <section class="mapview"><canvas id="map" width="807" height="736"></canvas></section>
  </main>

  <footer class="statusbar">
    <div class="field locator"><svg viewBox="0 0 12 14"><circle cx="5" cy="5" r="4" fill="none" stroke="#999" stroke-width="1.200"/><path d="M8 8.500l3.500 4" stroke="#999" stroke-width="1.800"/></svg><span>Type to locate (Ctrl+K)</span></div>
    <div class="clip msg"><span>8 legend entries removed.</span></div>
    <div class="clip coord-label"><span>Coordinate</span></div>
    <div class="field coord">-1289016,6052532</div>
    <svg class="mouse" viewBox="0 0 16 16"><path d="M1 1l13 13M1 8l6 6M8 1l-2 4M15 2l-5 6M3 3l10 4" stroke="#222" fill="none"/><path d="M4 1l5 6M6 0l5 6M2 5l6 4" stroke="#333" stroke-width="1.300"/><ellipse cx="11" cy="11" rx="4" ry="4.500" fill="#aaa" stroke="#333"/><circle cx="9.500" cy="10" r="1.500" fill="#fff" stroke="#222"/><circle cx="13" cy="7.500" r="1.300" fill="#fff" stroke="#222"/></svg>
    <div class="clip scale-label"><span>Scale</span></div>
    <div class="field scale"><span>1:12648999</span><em><i class="drop"></i></em></div>
    <svg class="lock" viewBox="0 0 13 15"><path d="M3 7V4.500a3.500 3.500 0 0 1 7 0V7" fill="none" stroke="#888" stroke-width="1.600"/><rect x=".5" y="6.500" width="12" height="8.500" rx="1" fill="#666"/></svg>
    <div class="clip mag-label"><span>Magnifier</span></div>
    <div class="field spin mag"><span>100%</span><em></em></div>
    <div class="clip rot-label"><span>Rotation</span></div>
    <div class="field spin rot"><span>0,0 °</span><em></em></div>
    <i class="check render"><svg viewBox="0 0 12 12"><path d="M3 6l2 3.500L9.300 1.500" stroke="#000" stroke-width="1.600" fill="none"/></svg></i>
    <span class="render-label">Render</span>
    <svg class="globe" viewBox="0 0 16 16"><circle cx="8" cy="8" r="6.500" fill="#b5b5b5" stroke="#666"/><path d="M8 1v14M1 8h14M2.500 4.500h11M2.500 11.500h11M8 1c-5 4-5 10 0 14M8 1c5 4 5 10 0 14" stroke="#666" fill="none"/></svg>
    <span class="epsg">EPSG:32630</span>
    <svg class="bubble" viewBox="0 0 16 15"><path d="M8 .5c4 0 7.500 2 7.500 6 0 2-.8 3.500-2 4.500l1 3.500-4-2c-6 1.500-10-1.500-10-6 0-4 3.500-6 7.500-6z" fill="#666"/><path d="M3.500 5.500h2v2h-2zM7 5.500h2v2H7zM10.500 5.500h2v2h-2z" fill="#fff"/></svg>
  </footer>
</div>
<script src="map.js"></script>
</body>
</html>
```
FILE: styles.css
```css
* { box-sizing: border-box; }
body {
  margin: 0;
  width: 1922px;
  height: 1016px;
  overflow: hidden;
  font-family: "DejaVu Sans", sans-serif;
  font-size: 24px;
  color: #000;
  background: #eee;
}
.sprite { position: absolute; }
.window {
  width: 1922px;
  height: 1016px;
  border: 1px solid #bdbdbd;
  background: #eee;
  display: flex;
  flex-direction: column;
}

/* title bar */
.titlebar {
  flex: 0 0 37px;
  background: #333132;
  border-bottom: 1px solid #222;
  display: grid;
  grid-template-columns: 1fr auto 1fr;
  align-items: center;
}
.title {
  grid-column: 2;
  font: bold 23px/36px "Open Sans", "Noto Sans", sans-serif;
  letter-spacing: .4px;
  color: #fff;
  height: 36px;
  white-space: nowrap;
}
.controls {
  display: flex;
  justify-content: flex-end;
  align-items: center;
  padding-right: 9px;
}
.min { width: 8px; height: 1px; background: #fff; margin: 5px 26px 0 0; }
.restore { width: 9px; height: 9px; margin-right: 20px; }
.close { width: 19px; height: 19px; border-radius: 50%; background: #e95420; display: flex; }

/* menu */
.menubar {
  flex: 0 0 34px;
  min-height: 0;
  height: 34px;
  display: flex;
  padding-left: 3px;
  border-bottom: 1px solid #cfcfcf;
  line-height: 35px;
}
.menubar span { padding: 0 7.470px; height: 33px; }
u { text-decoration-thickness: 2px; text-underline-offset: 2px; text-decoration-skip-ink: none; }

/* toolbars */
.toolbar {
  flex: 0 0 39px;
  display: flex;
  align-items: center;
  border-bottom: 1px solid #b4b4b4;
  background: linear-gradient(#f8f8f8, #ececec);
}
.toolbar.tall { flex-basis: 45px; padding-top: 1px; }
.toolbar.last { flex-basis: 38px; padding-top: 1px; }
.toolbar b {
  width: 32px;
  height: 31px;
  margin-right: 1px;
  display: flex;
  align-items: center;
  justify-content: center;
}
.toolbar b svg { width: 24px; height: 24px; overflow: visible; }
.toolbar b.on { background: #dadada; border: 1px solid #a9a9a9; border-radius: 3px; }
b.off svg { opacity: .35; filter: grayscale(.6); }
.grip {
  width: 16px;
  height: 18px;
  background:
    radial-gradient(circle, #b0b0b0 .6px, transparent 1px) 8px 0 / 2.500px 3px;
  background-clip: content-box;
  padding: 0 4px 0 8px;
}
.grip.first { width: 13px; padding: 0 4px 0 5px; }
.grip.wide { width: 17px; padding: 0 4px 0 9px; }
.drop { width: 12px; display: flex; justify-content: center; }
.drop::before { content: ""; border: 4px solid transparent; border-top-color: #4a4a4a; border-bottom: 0; }
.drop.off::before { opacity: .3; }
.sep { width: 7px; height: 18px; background: linear-gradient(#ccc, #ccc) 3px 0 / 1px 100% no-repeat; }

.field { background: #fff; border: 1px solid #a9a9a9; border-radius: 3px; white-space: nowrap; }
.spin { display: flex; justify-content: space-between; }
.spin em {
  width: 14px;
  border-left: 1px solid #b4b4b4;
  background: #f8f8f8;
  display: flex;
  flex-direction: column;
  justify-content: center;
  align-items: center;
  gap: 10px;
}
.spin em::before { content: ""; border: 4px solid transparent; border-bottom-color: #4a4a4a; border-top: 0; }
.spin em::after { content: ""; border: 4px solid transparent; border-top-color: #4a4a4a; border-bottom: 0; }
.tolerance { width: 169px; height: 35px; line-height: 33px; padding-left: 4px; }
.units {
  width: 176px;
  height: 38px;
  margin-left: 1px;
  padding: 0 5px 0 4px;
  display: flex;
  justify-content: space-between;
  align-items: center;
  border: 1px solid #a9a9a9;
  border-radius: 3px;
  background: linear-gradient(#fff, #f2f2f2);
}

/* workspace */
.workspace { flex: 1; display: flex; min-height: 0; }
.panel { width: 1105px; display: flex; flex-direction: column; }
.panel-head {
  height: 36px;
  display: flex;
  justify-content: space-between;
  align-items: center;
  padding: 0 2px 0 4px;
}
.panel-head h2 { margin: 0 0 2px; font-size: 24px; font-weight: normal; line-height: 32px; }
.dock { width: 26px; height: 12px; margin-bottom: 3px; }
.panel-tools { height: 27px; display: flex; align-items: center; padding: 0 0 5px 3px; }
.panel-tools b { width: 25px; display: flex; justify-content: center; }
.panel-tools b.after { margin-left: 1px; }
.panel-tools svg { width: 15px; height: 15px; overflow: visible; }
.tree {
  flex: 1;
  border: 1px solid #b4b4b4;
  background: #fff;
  display: flex;
  flex-direction: column;
  min-height: 0;
}
.rows { flex: 1; overflow: hidden; }
.row {
  height: 31px;
  line-height: 31px;
  padding-left: 7px;
  display: flex;
  align-items: center;
  font-weight: bold;
  white-space: nowrap;
}
.row span { flex: none; padding-top: 1px; height: 31px; }
.row .cut { width: 1037px; overflow: hidden; }
.twist { width: 16px; flex: none; }
.twist::before { content: ""; display: block; width: 0; margin-left: 1px; border: 4px solid transparent; border-left-color: #555; border-right: 0; }
.check { width: 14px; height: 14px; border: 1px solid #aaa; background: #fff; display: flex; flex: none; }
.kind { width: 12px; height: 12px; margin: 0 8px; flex: none; }
.selected { background: linear-gradient(#308fce, #2f86c0); color: #e4eef7; padding-left: 24px; box-shadow: inset 0 1px #2a7fb8, inset 0 -1px #2a7fb8; }
.selected .grid { width: 14px; height: 16px; margin-right: 3px; flex: none; }
.selected span {
  text-decoration: underline;
  text-decoration-thickness: 1px;
  text-underline-offset: 3px;
  text-decoration-skip-ink: none;
  border-left: 1px solid #2b80ba;
  padding-left: 3px;
  width: 1061px;
}
.hscroll {
  height: 14px;
  border-top: 1px solid #b4b4b4;
  display: flex;
  background: linear-gradient(#fff, #f0f0f0);
}
.hscroll .left, .hscroll .right { width: 13px; display: flex; align-items: center; justify-content: center; }
.left { border-right: 1px solid #b4b4b4; }
.right { border-left: 1px solid #b4b4b4; }
.left::before { content: ""; border: 4px solid transparent; border-right-color: #4a4a4a; border-left: 0; }
.right::before { content: ""; border: 4px solid transparent; border-left-color: #4a4a4a; border-right: 0; }
.thumb { flex: 926; }
.groove { flex: 150; background: #e4e4e4; border-left: 1px solid #b4b4b4; }
.splitter { width: 6px; display: flex; align-items: center; }
.splitter .grip { width: 6px; padding: 0 1px 0 2px; height: 16px; }
.mapview { width: 809px; margin-top: 1px; border: 1px solid #b4b4b4; background: #fff; overflow: hidden; }
.mapview canvas { display: block; }

/* status bar */
.statusbar {
  flex: 0 0 43px;
  display: flex;
  align-items: center;
  padding-left: 4px;
  font-size: 21px;
}
.statusbar > * { flex: none; }
.locator {
  width: 500px;
  height: 36px;
  display: flex;
  align-items: center;
  padding-left: 8px;
  font-size: 24px;
  color: #858585;
}
.locator svg { width: 12px; height: 14px; margin-right: 8px; }
.clip { overflow: hidden; display: flex; height: 30px; line-height: 31px; white-space: nowrap; }
.msg { width: 37px; margin-left: 8px; }
.coord-label { width: 106px; margin-left: 9px; justify-content: center; }
.coord { width: 211px; height: 33px; margin-left: 3px; padding-left: 3px; line-height: 32px; font-size: 20.900px; }
.mouse { width: 16px; height: 17px; margin-left: 4px; }
.scale-label { width: 48px; margin-left: 13px; justify-content: center; }
.scale { width: 155px; height: 36px; margin-left: 3px; padding-left: 4px; display: flex; justify-content: space-between; line-height: 35px; font-size: 20.900px; }
.scale em { width: 20px; border-left: 1px solid #b4b4b4; background: linear-gradient(#fff, #eee); display: flex; align-items: center; justify-content: center; }
.lock { width: 13px; height: 15px; margin-left: 12px; }
.mag-label { width: 90px; margin-left: 8px; justify-content: center; }
.mag { width: 133px; height: 36px; margin-left: 2px; padding-left: 4px; line-height: 35px; }
.rot-label { width: 80px; margin-left: 9px; justify-content: center; }
.rot { width: 129px; height: 35px; margin-left: 9px; padding-left: 4px; line-height: 34px; }
.render { margin-left: 6px; }
.render-label { margin-left: 5px; }
.globe { width: 16px; height: 16px; margin-left: 16px; }
.epsg { margin-left: 2px; padding-top: 1px; }
.bubble { width: 17px; height: 15px; margin-left: 31px; }
```
FILE: map.js
```javascript
// Draws the land cover raster: an ocean footprint with classified land pixels.
const canvas = document.getElementById('map');
const ctx = canvas.getContext('2d');
const W = canvas.width, H = canvas.height;
const OX = 1113, OY = 235;

const PALETTE = {
  yellow: [255, 255, 76], pink: [240, 150, 255], red: [250, 0, 0],
  green: [0, 204, 0], olive: [100, 140, 0], dark: [0, 120, 0],
  brown: [88, 72, 31], orange: [255, 187, 34], water: [0, 50, 200]
};
const NAMES = Object.keys(PALETTE);

function hash(x, y, s) {
  let h = Math.imul(x | 0, 374761393) ^ Math.imul(y | 0, 668265263) ^ Math.imul(s, 2246822519);
  h = Math.imul(h ^ (h >>> 13), 1274126177);
  h = Math.imul(h ^ (h >>> 15), 2246822519);
  return ((h ^ (h >>> 16)) >>> 0) / 4294967296;
}
function noise(x, y, size, s) {
  const gx = x / size, gy = y / size, x0 = Math.floor(gx), y0 = Math.floor(gy);
  let fx = gx - x0, fy = gy - y0;
  fx = fx * fx * (3 - 2 * fx); fy = fy * fy * (3 - 2 * fy);
  const a = hash(x0, y0, s), b = hash(x0 + 1, y0, s), c = hash(x0, y0 + 1, s), d = hash(x0 + 1, y0 + 1, s);
  return a + (b - a) * fx + (c - a) * fy + (a - b - c + d) * fx * fy;
}

// Coastlines in thirds of a pixel, with the origin of each group.
const NORTH = [1500, 280], SOUTH = [1500, 610];
const COASTS = [
  [NORTH, '485,165 500,172 540,170 565,165 585,162 583,185 560,205 540,222 530,235 545,240 525,262 515,272 535,268 560,258 600,258 648,258 655,275 640,310 632,340 615,375 590,385 608,400 590,412 555,420 540,422 560,432 600,423 625,432 645,445 665,468 675,500 680,530 690,560 715,570 735,575 750,600 760,610 760,630 765,655 735,650 768,662 800,662 800,936 740,940 705,945 710,962 690,955 660,955 630,965 600,950 570,955 555,985 545,1003 520,990 480,990 450,1015 420,1015 418,1005 450,995 470,965 490,950 495,925 515,905 560,905 590,905 600,885 575,884 550,878 510,860 485,850 460,858 450,835 470,825 490,820 520,800 525,760 520,735 487,744 510,720 520,700 560,692 585,695 588,660 592,620 598,605 570,600 555,570 570,540 560,530 535,545 510,550 480,545 465,530 485,495 500,470 485,455 480,430 485,415 462,440 468,475 455,480 450,450 440,490 432,488 445,440 445,405 455,375 430,385 405,392 420,370 405,365 425,345 440,335 435,310 445,290 435,270 440,240 460,240 465,210 475,190'],
  [NORTH, '372,210 390,195 418,176 422,190 410,215 385,237 372,240 382,225'],
  [NORTH, '349,255 366,252 360,290 354,312 340,326 350,295'],
  [NORTH, '385,270 400,265 408,253 420,275 432,300 420,308 400,290'],
  [NORTH, '393,442 432,414 425,435 405,462'],
  [NORTH, '400,318 412,322 410,334'], [NORTH, '370,372 396,354 396,362'],
  [NORTH, '568,125 582,110 596,118 592,134 582,148 570,134'],
  [NORTH, '586,96 596,92 594,102'], [NORTH, '608,100 622,88 612,104'], [NORTH, '590,142 596,152 590,152'],
  [NORTH, '672,20 677,22 676,38 672,34'], [NORTH, '656,69 661,69 661,75 656,75'],
  [NORTH, '285,500 310,495 345,485 360,500 380,505 405,497 415,515 425,535 440,560 442,590 420,605 400,620 385,625 400,645 402,690 406,730 390,770 382,802 355,800 320,805 290,820 265,835 230,850 195,858 165,856 185,842 150,840 178,825 132,818 165,802 130,790 140,778 175,778 170,755 205,745 175,745 200,725 205,705 230,690 185,690 200,678 163,655 190,640 170,620 165,605 180,600 168,580 190,575 230,580 255,588 275,570 305,550 255,545 270,530'],
  [NORTH, '483,617 490,600 511,584 507,605 492,618'],
  [NORTH, '486,692 505,681 520,692 510,706 495,702'],
  [SOUTH, '657,64 675,70 702,64 705,80 712,98 785,101 830,101 840,1060 135,1060 137,1016 150,960 162,920 158,860 150,820 162,795 145,765 140,735 130,715 155,690 200,685 215,655 240,648 270,655 285,672 350,672 385,668 430,683 480,692 540,685 580,695 620,700 650,706 680,697 697,685 708,650 714,600 715,540 718,480 725,478 745,500 757,525 768,532 750,498 735,480 715,455 702,432 722,428 718,402 690,392 670,370 650,350 655,325 640,305 625,285 595,280 570,262 545,252 500,252 480,230 505,222 485,208 502,202 472,198 472,180 500,172 550,165 555,152 585,152 603,182 630,172 665,172 690,172 682,140 682,110 665,90'],
  [SOUTH, '608,87 621,84 612,92'], [SOUTH, '640,110 654,112 650,117 640,115'], [SOUTH, '573,298 582,300 580,306 574,304']
];

// Local class mixes: x, y, radius, weights. Nearby entries blend.
const MIX = [
  [1680, 350, 45, { yellow: 88, brown: 5, olive: 3, orange: 2, water: 1, dark: 1 }],
  [1640, 380, 35, { yellow: 94, brown: 3, orange: 2 }],
  [1682, 400, 30, { yellow: 88, dark: 4, brown: 5, olive: 3 }],
  [1713, 372, 13, { pink: 90, yellow: 8, red: 2 }],
  [1704, 398, 12, { pink: 75, yellow: 19, red: 6 }],
  [1694, 411, 10, { pink: 60, red: 12, yellow: 28 }],
  [1655, 415, 15, { yellow: 55, brown: 35, olive: 10 }],
  [1673, 427, 5, { red: 55, yellow: 35, brown: 10 }],
  [1680, 450, 25, { yellow: 78, olive: 11, brown: 11 }],
  [1704, 450, 16, { yellow: 74, olive: 16, brown: 8, dark: 2 }],
  [1711, 431, 11, { pink: 70, yellow: 25, red: 5 }],
  [1722, 457, 6, { red: 45, pink: 35, yellow: 20 }],
  [1703, 480, 22, { yellow: 92, brown: 3, olive: 4 }],
  [1728, 478, 10, { pink: 75, red: 10, yellow: 15 }],
  [1745, 492, 18, { pink: 90, yellow: 5, red: 3 }],
  [1706, 504, 12, { yellow: 42, red: 22, pink: 20, olive: 16 }],
  [1728, 514, 16, { pink: 54, yellow: 22, red: 8, olive: 16 }],
  [1745, 535, 26, { pink: 87, yellow: 5, red: 6, olive: 2 }],
  [1717, 538, 6, { red: 65, pink: 25, yellow: 10 }],
  [1700, 535, 16, { yellow: 46, pink: 40, red: 4, olive: 10 }],
  [1684, 535, 20, { yellow: 76, olive: 13, brown: 5, pink: 4, dark: 2 }],
  [1690, 567, 9, { olive: 42, yellow: 30, red: 23, green: 5 }],
  [1755, 570, 8, { red: 80, pink: 10, olive: 10 }],
  [1745, 582, 12, { olive: 55, red: 15, pink: 15, dark: 10, yellow: 5 }],
  [1725, 580, 18, { pink: 62, yellow: 18, olive: 14, red: 6 }],
  [1728, 594, 8, { olive: 35, red: 20, pink: 35, yellow: 10 }],
  [1680, 592, 16, { yellow: 76, pink: 12, olive: 9, red: 2 }],
  [1700, 590, 15, { pink: 50, yellow: 35, olive: 12, red: 3 }],
  [1655, 560, 12, { yellow: 80, red: 4, pink: 10, olive: 6 }],
  [1650, 612, 12, { yellow: 50, pink: 38, red: 6, olive: 6 }],
  [1590, 480, 60, { yellow: 89, olive: 7, red: 1, brown: 1, water: 1, pink: 1 }],
  [1625, 460, 18, { yellow: 82, olive: 8, pink: 5, red: 3, brown: 2 }],
  [1631, 467, 2.500, { water: 90, yellow: 10 }],
  [1625, 505, 13, { yellow: 55, pink: 33, olive: 8, red: 4 }],
  [1630, 509, 3, { red: 75, pink: 20, yellow: 5 }],
  [1618, 530, 13, { yellow: 50, pink: 30, olive: 20 }],
  [1565, 540, 35, { yellow: 88, olive: 9, pink: 2, water: 1 }],
  [1585, 558, 9, { yellow: 64, pink: 28, olive: 8 }],
  [1728, 640, 14, { yellow: 50, pink: 25, olive: 20, red: 5 }],
  [1750, 655, 18, { pink: 55, yellow: 33, olive: 8, red: 4 }],
  [1675, 673, 18, { pink: 50, olive: 28, yellow: 12, green: 6, red: 4 }],
  [1690, 690, 20, { pink: 42, olive: 32, green: 8, yellow: 12, red: 4, dark: 2 }],
  [1715, 680, 22, { pink: 62, yellow: 10, olive: 20, red: 4, green: 4 }],
  [1750, 680, 26, { pink: 55, yellow: 27, olive: 11, red: 4, green: 3 }],
  [1729, 714, 4, { red: 50, pink: 35, olive: 15 }],
  [1745, 730, 26, { pink: 70, yellow: 18, olive: 9, red: 3 }],
  [1758, 765, 14, { pink: 56, olive: 22, yellow: 8, orange: 8, green: 6 }],
  [1757, 785, 12, { olive: 30, green: 10, dark: 18, pink: 27, red: 8, yellow: 7 }],
  [1745, 810, 18, { brown: 52, olive: 18, dark: 15, pink: 15 }],
  [1762, 833, 14, { pink: 50, olive: 25, green: 12, red: 3, dark: 10 }],
  [1740, 842, 12, { pink: 35, green: 35, olive: 25, dark: 5 }],
  [1745, 855, 13, { green: 62, dark: 16, olive: 22 }],
  [1710, 849, 14, { green: 52, dark: 20, olive: 24, pink: 4 }],
  [1765, 861, 6, { yellow: 70, olive: 20, green: 10 }],
  [1580, 832, 16, { green: 50, dark: 22, olive: 24, pink: 4 }],
  [1560, 850, 22, { olive: 32, green: 23, pink: 30, dark: 11, red: 2 }],
  [1585, 850, 14, { pink: 30, green: 32, olive: 28, dark: 10 }],
  [1625, 845, 22, { green: 55, olive: 24, dark: 14, yellow: 4, red: 3 }],
  [1665, 850, 22, { green: 42, olive: 30, dark: 12, yellow: 12, red: 4 }],
  [1625, 856, 12, { yellow: 62, olive: 20, orange: 12, green: 6 }],
  [1580, 880, 24, { olive: 35, yellow: 33, dark: 14, green: 9, orange: 8 }],
  [1605, 885, 16, { yellow: 46, olive: 30, orange: 20, dark: 4 }],
  [1560, 910, 16, { olive: 36, dark: 16, red: 14, yellow: 24, green: 8 }],
  [1555, 915, 5, { red: 70, olive: 20, dark: 10 }],
  [1595, 915, 22, { orange: 42, yellow: 24, olive: 26, dark: 3, pink: 5 }],
  [1575, 940, 24, { olive: 42, dark: 16, yellow: 28, orange: 10, green: 4 }],
  [1612, 940, 22, { olive: 46, dark: 16, yellow: 28, orange: 10 }],
  [1645, 880, 24, { pink: 95, olive: 2, red: 1, orange: 2 }],
  [1665, 875, 20, { pink: 94, orange: 3, red: 2, olive: 1 }],
  [1645, 912, 18, { pink: 92, yellow: 3, olive: 4, red: 1 }],
  [1662, 904, 7, { brown: 30, olive: 34, pink: 34 }],
  [1618, 905, 12, { yellow: 36, orange: 22, olive: 22, pink: 20 }],
  [1660, 940, 18, { olive: 34, yellow: 30, orange: 22, dark: 8, pink: 6 }],
  [1697, 885, 13, { brown: 32, dark: 22, olive: 26, green: 14, orange: 6 }],
  [1706, 875, 14, { orange: 42, pink: 30, olive: 22, brown: 6 }],
  [1692, 866, 8, { pink: 85, green: 10, olive: 5 }],
  [1728, 868, 12, { pink: 74, yellow: 12, olive: 14 }],
  [1720, 890, 14, { pink: 82, olive: 6, orange: 12 }],
  [1690, 912, 14, { orange: 26, pink: 38, olive: 26, brown: 10 }],
  [1714, 908, 14, { pink: 86, orange: 8, olive: 6 }],
  [1755, 893, 20, { pink: 88, orange: 5, yellow: 5, red: 1, olive: 1 }],
  [1750, 870, 12, { olive: 34, brown: 34, dark: 12, orange: 16, green: 4 }],
  [1749, 897, 3, { red: 80, pink: 20 }],
  [1738, 915, 14, { yellow: 40, pink: 32, olive: 16, orange: 12 }],
  [1682, 925, 10, { dark: 32, olive: 38, brown: 20, yellow: 10 }],
  [1695, 937, 16, { pink: 84, olive: 8, orange: 8 }],
  [1678, 940, 5, { red: 85, pink: 15 }],
  [1718, 935, 13, { brown: 30, olive: 36, dark: 16, pink: 12, orange: 6 }],
  [1740, 930, 12, { pink: 64, yellow: 26, olive: 10 }],
  [1756, 940, 16, { olive: 38, dark: 16, orange: 26, yellow: 16, brown: 4 }],
  [1765, 915, 9, { pink: 68, orange: 22, olive: 10 }],
  [1670, 950, 12, { pink: 78, olive: 12, red: 5, orange: 5 }],
  [1700, 952, 12, { pink: 82, olive: 12, red: 6 }]
].map(([x, y, r, w]) => [x, y, r, NAMES.map(n => w[n] || 0)]);

function footprint(c) {
  c.beginPath();
  c.moveTo(1414.500, 252);
  [[1432, 257], [1456, 263], [1482, 268.500], [1512, 274], [1546, 279], [1580, 283], [1614, 286], [1648, 288], [1700, 288.500], [1746, 288],
    [1748.500, 335], [1752, 425], [1756, 512], [1759, 570], [1761, 617], [1762, 643], [1765, 720], [1768, 800], [1771, 880], [1773, 953],
    [1613, 953], [1580, 951.500], [1546, 949], [1500, 946], [1444, 940], [1400, 934.500], [1348, 927], [1300, 919], [1260, 912]].forEach(p => c.lineTo(p[0], p[1]));
  c.quadraticCurveTo(1324, 582, 1414.500, 252);
  c.closePath();
  c.fill();
}
function layer(draw) {
  const k = document.createElement('canvas');
  k.width = W; k.height = H;
  const c = k.getContext('2d');
  c.translate(-OX, -OY);
  draw(c);
  return c.getImageData(0, 0, W, H).data;
}
const sea = layer(footprint);
const land = layer(c => COASTS.forEach(([o, pts]) => {
  c.beginPath();
  pts.split(' ').forEach(p => { const [x, y] = p.split(',').map(Number); c.lineTo(o[0] + x / 3, o[1] + y / 3); });
  c.closePath();
  c.fill();
}));

const out = ctx.createImageData(W, H);
for (let y = 0; y < H; y++) for (let x = 0; x < W; x++) {
  const i = (y * W + x) * 4;
  if (sea[i + 3] < 128) continue;
  let rgb = [0, 0, 128];
  const jx = Math.round((noise(x, y, 2.500, 1) - .5) * 4), jy = Math.round((noise(x, y, 2.500, 2) - .5) * 4);
  const j = ((y + jy) * W + x + jx) * 4;
  if (land[j + 3] > 110) {
    const X = x + OX + (noise(x, y, 9, 3) - .5) * 18 + (noise(x, y, 4, 4) - .5) * 10;
    const Y = y + OY + (noise(x, y, 9, 5) - .5) * 18 + (noise(x, y, 4, 6) - .5) * 10;
    const w = new Array(NAMES.length).fill(0);
    for (const [mx, my, r, m] of MIX) {
      const d = ((X - mx) ** 2 + (Y - my) ** 2) / (r * r);
      if (d > 30) continue;
      const g = Math.exp(-d * 1.600) / Math.sqrt(r);
      for (let k = 0; k < w.length; k++) w[k] += g * m[k];
    }
    // a shoreline pixel is more often built up
    const edge = [[-2, 0], [2, 0], [0, 2], [0, -2]].some(([a, b]) => land[((y + b) * W + x + a) * 4 + 3] < 100);
    const total = w.reduce((a, b) => a + b, 0);
    if (edge && y + OY > 570 && x + OX < 1760) w[2] += total * .18;
    // half of the pixels share their draw with a neighbour, so classes form small patches
    const shared = hash(x, y, 12) < .5;
    const draw = shared ? hash(x + hash(x >> 1, y, 13) * 2 >> 1, y + hash(x, y >> 1, 14) * 2 >> 1, 9) : hash(x, y, 10);
    let u = draw * w.reduce((a, b) => a + b, 0), k = 0;
    while (k < w.length - 1 && (u -= w[k]) > 0) k++;
    rgb = PALETTE[NAMES[k]];
  }
  out.data[i] = rgb[0]; out.data[i + 1] = rgb[1]; out.data[i + 2] = rgb[2]; out.data[i + 3] = 255;
}
ctx.putImageData(out, 0, 0);
```
